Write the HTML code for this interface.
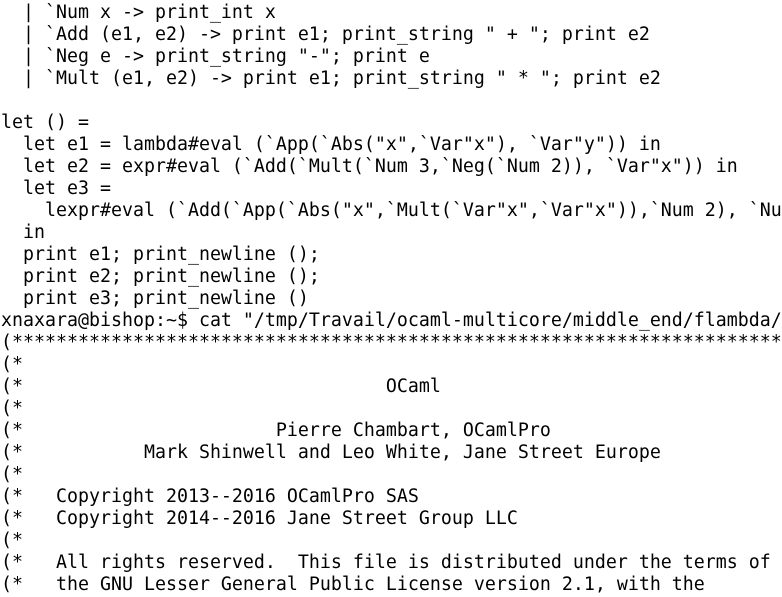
<!DOCTYPE html>
<html><head><meta charset="utf-8"><style>
html,body{margin:0;padding:0;background:#fff;width:782px;height:597px;overflow:hidden}
pre{margin:0;padding:2px 0 0 1px;width:781px;height:595px;overflow:hidden;font-family:"DejaVu Sans Mono","Liberation Mono",monospace;font-size:18.27px;line-height:22px;color:#000;white-space:pre}
</style></head><body><pre>  | `Num x -&gt; print_int x
  | `Add (e1, e2) -&gt; print e1; print_string " + "; print e2
  | `Neg e -&gt; print_string "-"; print e
  | `Mult (e1, e2) -&gt; print e1; print_string " * "; print e2

let () =
  let e1 = lambda#eval (`App(`Abs("x",`Var"x"), `Var"y")) in
  let e2 = expr#eval (`Add(`Mult(`Num 3,`Neg(`Num 2)), `Var"x")) in
  let e3 =
    lexpr#eval (`Add(`App(`Abs("x",`Mult(`Var"x",`Var"x")),`Num 2), `Nu
  in
  print e1; print_newline ();
  print e2; print_newline ();
  print e3; print_newline ()
xnaxara@bishop:~$ cat "/tmp/Travail/ocaml-multicore/middle_end/flambda/
(***********************************************************************
(*
(*                                 OCaml
(*
(*                       Pierre Chambart, OCamlPro
(*           Mark Shinwell and Leo White, Jane Street Europe
(*
(*   Copyright 2013--2016 OCamlPro SAS
(*   Copyright 2014--2016 Jane Street Group LLC
(*
(*   All rights reserved.  This file is distributed under the terms of
(*   the GNU Lesser General Public License version 2.1, with the
</pre></body></html>
